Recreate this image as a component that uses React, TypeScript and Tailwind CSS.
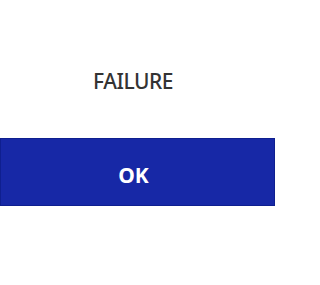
export default function App() {
  return (
    <div className="flex h-[285px] w-[300px] flex-col bg-white font-['Noto_Sans',sans-serif]">
      <div className="flex w-[266px] justify-center pt-[68px]">
        <p className="text-[21px] font-medium leading-[26px] tracking-[-0.5px] text-[#333333]">FAILURE</p>
      </div>
      <button
        type="button"
        className="mt-[44px] flex h-[68px] w-[275px] items-center justify-center border border-[#0f1f8f] bg-[#1728a6] pt-[7px] pr-[8px] text-[21px] font-bold text-white"
      >
        OK
      </button>
    </div>
  );
}
